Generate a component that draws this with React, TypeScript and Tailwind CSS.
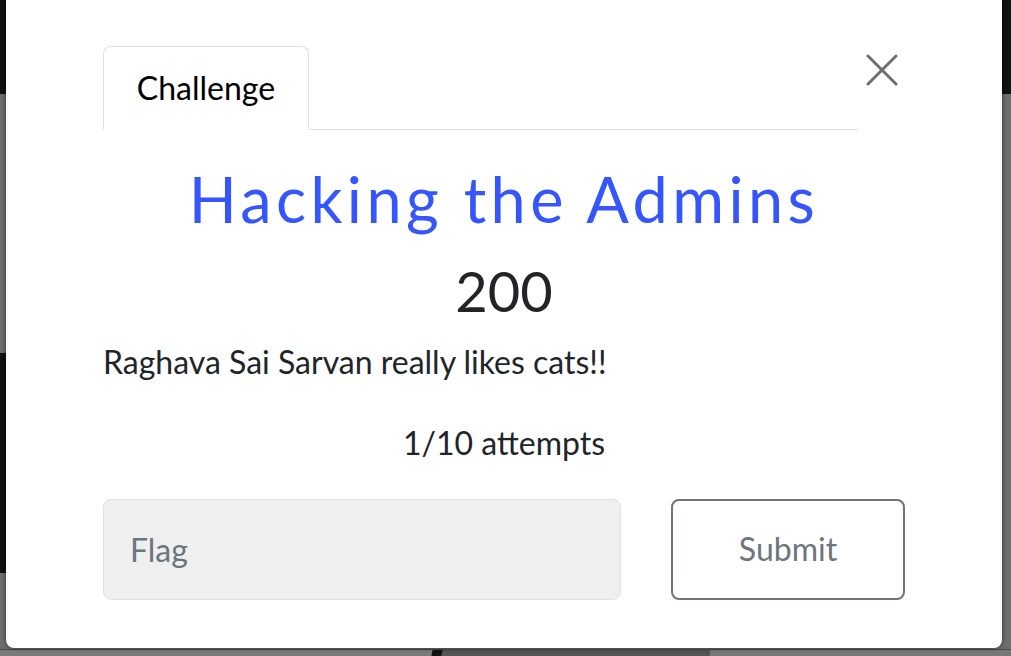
import React from 'react';

function CloseIcon() {
  return (
    <svg width="32" height="32" viewBox="0 0 32 32" fill="none" stroke="#6f6f6f" strokeWidth="3" strokeLinecap="round">
      <line x1="2" y1="2" x2="30" y2="30" />
      <line x1="30" y1="2" x2="2" y2="30" />
    </svg>
  );
}

function Backdrop() {
  return (
    <div className="h-[656px] flex flex-col bg-[#6d6d6d]">
      <div className="h-[94px] bg-[#111213]" />
      <div className="h-[259px]" />
      <div className="h-[220px] w-[200px] bg-[#111213]" />
      <div className="flex-1" />
      <div className="h-[7px] flex border-t border-[#4a4a4a]">
        <div className="w-[432px] bg-[#7a7a7a]" />
        <div className="w-[10px] bg-[#111] -skew-x-12" />
        <div className="w-[268px] bg-[#555]" />
        <div className="flex-1 bg-[#787878]" />
      </div>
    </div>
  );
}

export default function App() {
  return (
    <div className="relative w-[1011px] h-[656px] overflow-hidden font-['Lato',sans-serif]">
      <Backdrop />

      <div className="absolute left-[6px] top-[-10px] w-[996px] h-[658px] bg-white rounded-lg shadow-[0_0_4px_rgba(0,0,0,0.6)] px-[97px] pt-[56px]">
        <div className="flex items-start">
          <div className="w-[755px] flex border-b border-[#dee2e6]">
            <div className="-mb-px w-[206px] h-[84px] flex items-center justify-center bg-white border border-[#dee2e6] border-b-white rounded-t-lg text-[32px] text-black">
              Challenge
            </div>
          </div>
          <button className="ml-[8px] mt-[8px] w-[32px] h-[32px]">
            <CloseIcon />
          </button>
        </div>

        <h2 className="mt-[31px] text-center text-[63px] leading-[1.2] tracking-[4.4px] text-[#3656fd]">
          Hacking the Admins
        </h2>
        <h3 className="mt-[20px] text-center text-[56px] leading-[1.2] text-[#212529]">200</h3>

        <p className="mt-[14px] text-[32px] leading-[1.5] text-[#212529]">
          Raghava Sai Sarvan really likes cats!!
        </p>
        <p className="mt-[33px] text-center text-[32px] leading-[1.5] text-[#212529]">1/10 attempts</p>

        <div className="mt-[32px] flex gap-[50px]">
          <input
            placeholder="Flag"
            className="w-[518px] h-[101px] bg-[#efefef] border border-[#dee2e6] rounded-lg pl-[26px] text-[32px] placeholder:text-[#6c757d] outline-none"
          />
          <button className="flex-1 h-[101px] border-2 border-[#6c757d] rounded-lg text-[32px] text-[#6c757d] bg-white">
            Submit
          </button>
        </div>
      </div>
    </div>
  );
}
